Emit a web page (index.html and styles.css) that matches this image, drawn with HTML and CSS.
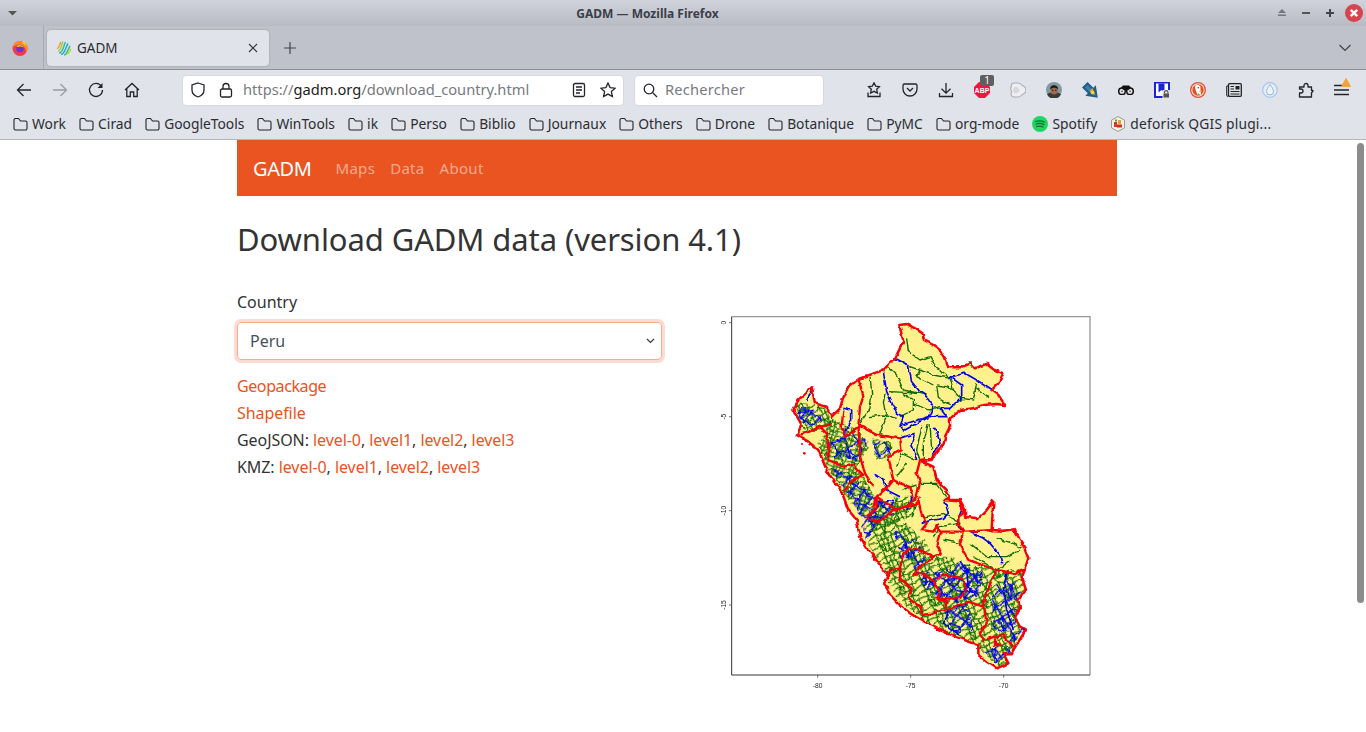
FILE: index.html
```html
<!DOCTYPE html>
<html lang="en">
<head>
<meta charset="utf-8">
<title>GADM — Mozilla Firefox</title>
<link rel="stylesheet" href="styles.css">
</head>
<body>
<div class="window">
  <header class="titlebar">
    <svg class="wm-menu" width="12" height="6" viewBox="0 0 12 6"><path d="M1 1h9L5.500 5.500z" fill="#555"/></svg>
    <div class="wm-title">GADM — Mozilla Firefox</div>
    <div class="wm-buttons">
      <svg width="12" height="10" viewBox="0 0 12 10"><path d="M6 1l4 4H2z" fill="#777"/><rect x="2" y="6.500" width="8" height="1.500" fill="#777"/></svg>
      <svg width="12" height="10" viewBox="0 0 12 10"><rect x="2" y="4" width="8" height="2" fill="#555"/></svg>
      <svg width="12" height="12" viewBox="0 0 12 12"><path d="M5 2h2v3h3v2H7v3H5V7H2V5h3z" fill="#444"/></svg>
      <svg class="wm-close" width="18" height="18" viewBox="0 0 18 18"><circle cx="9" cy="9" r="9" fill="#d9434e"/><path d="M5.800 5.800l6.400 6.400M12.200 5.800l-6.400 6.400" stroke="#fff" stroke-width="2.400"/></svg>
    </div>
  </header>

  <div class="tabstrip">
    <div class="ff-slot">
      <svg width="16" height="16" viewBox="0 0 16 16">
        <circle cx="8" cy="8.500" r="7.500" fill="#f2394f"/>
        <path d="M.6 8C1 3.500 4 1 7 1c4.500 0 8.500 3 8.500 7.500 0 1.500-.4 2.800-1 4C14 8 11 4.500 6.500 4.500 4 4.500 2 6 .6 8z" fill="#ff8f1f"/>
        <path d="M10.500 0c2 1 3.500 3 3.500 5.500L10 3z" fill="#ffc82e"/>
        <circle cx="8" cy="8.500" r="3.800" fill="#6f35c9"/>
        <path d="M4.300 6.500c2-2 6-2 7.500 1-2-1.200-4.500-1.500-6-.4z" fill="#ffb52e"/>
      </svg>
    </div>
    <div class="tab">
      <svg class="favicon" width="16" height="16" viewBox="0 0 16 16" fill="none" stroke-width="1.500">
        <path d="M1 8c2 1 2-3 4-6" stroke="#f2a233"/>
        <path d="M2 11c3 0 3-5 5-9.500" stroke="#a6cf3a"/>
        <path d="M3 13c4 0 4-6 6.500-11" stroke="#2dbfa0"/>
        <path d="M5 14.500c4 0 4-6 7-11" stroke="#2aa7e0"/>
        <path d="M8 15c3 0 3.500-5 6-9" stroke="#35c46a"/>
        <path d="M11 14c2 0 2.500-3 4-5" stroke="#b6d43a"/>
      </svg>
      <span class="tab-label">GADM</span>
      <svg class="tab-close" width="10" height="10" viewBox="0 0 10 10"><path d="M1 1l8 8M9 1l-8 8" stroke="#333" stroke-width="1.100"/></svg>
    </div>
    <svg class="new-tab" width="14" height="14" viewBox="0 0 14 14"><path d="M7 1v12M1 7h12" stroke="#444" stroke-width="1.200"/></svg>
    <svg class="tab-list" width="14" height="8" viewBox="0 0 14 8"><path d="M1.500 1l5.500 5.500L12.500 1" fill="none" stroke="#444" stroke-width="1.200"/></svg>
  </div>

  <div class="toolbar">
    <div class="nav-icons">
      <svg width="16" height="16" viewBox="0 0 16 16" class="ico"><path d="M15 8H1.500M7.500 2L1.500 8l6 6"/></svg>
      <svg width="16" height="16" viewBox="0 0 16 16" class="ico ico-off"><path d="M1 8h13.500M8.500 2l6 6-6 6"/></svg>
      <svg width="16" height="16" viewBox="0 0 16 16" class="ico"><path d="M13.500 4.500A6.500 6.500 0 1 0 14.500 8"/><path d="M14.500 1v5h-5z" class="solid"/></svg>
      <svg width="16" height="16" viewBox="0 0 16 16" class="ico"><path d="M1 8l7-6.500L15 8M2.800 6.500V14.500H6.300V10h3.400v4.500h3.500V6.500"/></svg>
    </div>
    <div class="urlbar">
      <svg width="16" height="16" viewBox="0 0 16 16" class="ico"><path d="M8 1l6 2v5c0 3.500-3 6-6 7-3-1-6-3.500-6-7V3z"/></svg>
      <svg width="14" height="16" viewBox="0 0 14 16" class="ico url-lock"><rect x="1.500" y="7" width="11" height="8" rx="1.500"/><path d="M4 7V4.500a3 3 0 0 1 6 0V7"/></svg>
      <span class="url"><span class="url-dim">https://</span>gadm.org<span class="url-dim">/download_country.html</span></span>
      <svg width="14" height="16" viewBox="0 0 14 16" class="ico url-reader"><rect x="1.500" y="1.500" width="11" height="13" rx="1.500"/><path d="M4 5h6M4 8h6M4 11h4"/></svg>
      <svg width="16" height="16" viewBox="0 0 16 16" class="ico"><path d="M8 1l2.100 4.600 5 .6-3.700 3.400 1 5L8 12.100 3.600 14.600l1-5L.9 6.200l5-.6z"/></svg>
    </div>
    <div class="searchbar">
      <svg width="15" height="15" viewBox="0 0 15 15" class="ico"><circle cx="6" cy="6" r="4.800"/><path d="M9.500 9.500L14 14"/></svg>
      <span class="search-text">Rechercher</span>
    </div>
    <div class="tool-icons">
      <svg width="16" height="16" viewBox="0 0 16 16" class="ico"><path d="M8 .8l1.700 3.400 3.700.5-2.700 2.600.7 3.700L8 9.300 4.600 11l.7-3.700L2.600 4.700l3.700-.5z"/><path d="M2 10.500v4h12v-4"/></svg>
      <svg width="16" height="16" viewBox="0 0 16 16" class="ico"><path d="M2.500 2h11A1.500 1.500 0 0 1 15 3.500V7a7 7 0 0 1-14 0V3.500A1.500 1.500 0 0 1 2.500 2z"/><path d="M5 6l3 3 3-3"/></svg>
      <svg width="16" height="16" viewBox="0 0 16 16" class="ico"><path d="M8 1v10M3.500 6.800L8 11.200l4.500-4.400M1.500 11v3.500h13V11"/></svg>
      <div class="abp">
        <svg width="16" height="16" viewBox="0 0 16 16"><path d="M5 0h6l5 5v6l-5 5H5l-5-5V5z" fill="#f0163f"/><text x="8" y="11" class="abp-text">ABP</text></svg>
        <span class="abp-badge">1</span>
      </div>
      <svg width="16" height="16" viewBox="0 0 16 16"><path d="M4 1h4c3 0 3 2 4.500 2.500C15 4.500 16 6 16 8s-1 3.500-3.500 4.500C11 13 11 15 8 15H4C2 15 1 13 1 11.500 2 10 2 10 1.200 8.500 .6 7 .6 6 1.200 4.500 1 3 2 1 4 1z" fill="#eceef2" stroke="#a9abaf" stroke-width="1.100"/><path d="M3 8h7l-3-3H4zM3 8h7l-3 3H4z" fill="#d6d7da"/></svg>
      <svg width="16" height="16" viewBox="0 0 16 16"><circle cx="8" cy="8" r="8" fill="#7f9aa3"/><path d="M1 12.500c2-3 12-3 14 0a8 8 0 0 1-14 0z" fill="#3c3a34"/><ellipse cx="8.200" cy="8.300" rx="3.600" ry="4.300" fill="#a0694a"/><path d="M4.200 7.500C3.500 2 12.500 1.800 12 7.500 10.500 5 6 5 4.200 7.500z" fill="#221611"/><path d="M6 8.200h1.500M9 8.200h1.500" stroke="#2a1a14"/></svg>
      <svg width="16" height="16" viewBox="0 0 16 16"><path d="M0 5.500L5.500 0l5.800 5.800L13.800 3.300 15.800 15.800 3.300 13.800l2.500-2.500z" fill="#1f5f8f"/><path d="M3 5.500L5.500 3l7 7-1 4-3-3z" fill="#3e7eaa"/><path d="M7.500 9l3-3 3 7.500z" fill="#f5a20c"/><circle cx="10.500" cy="10.500" r="1.800" fill="#ffd23a"/></svg>
      <svg width="16" height="10" viewBox="0 0 16 10"><circle cx="4" cy="6.300" r="3.300" fill="#e0e3e9" stroke="#111" stroke-width="1.500"/><circle cx="12" cy="6.300" r="3.300" fill="#e0e3e9" stroke="#111" stroke-width="1.500"/><path d="M3 2.500L5 .5h6l2 2-2.500 2.500h-5z" fill="#111"/><circle cx="4" cy="6.300" r="1" fill="#777"/><circle cx="12" cy="6.300" r="1" fill="#777"/></svg>
      <svg width="16" height="16" viewBox="0 0 16 16"><rect width="16" height="16" fill="#1c22d6"/><rect x="2" y="1.500" width="12" height="12.500" fill="#fff"/><path d="M4.500 1.500h6v9L7.500 8l-3 2.500z" fill="#1c22d6"/><path d="M2 14h6v2H2z" fill="#1c22d6"/><rect x="8.500" y="8" width="7.500" height="8" fill="#e0e3e9"/><rect x="9.500" y="11.500" width="5.500" height="4" fill="#555"/><path d="M10.500 11.500v-1.200a1.700 1.700 0 0 1 3.400 0v1.200" fill="none" stroke="#555" stroke-width="1.100"/></svg>
      <svg width="16" height="16" viewBox="0 0 16 16"><circle cx="8" cy="8" r="8" fill="#e4502c"/><circle cx="8" cy="8" r="6.700" fill="#fbe3dc"/><circle cx="8" cy="8" r="5.700" fill="#e4502c"/><path d="M5.500 3.200c2.500-1 5.500.3 5 3.300-.2 2 .8 4 .2 6.700H7.500C7 10 4 6 5.500 3.200z" fill="#fff"/><path d="M8 9.300l3.500-.9v2z" fill="#f5b92e"/><path d="M6.800 13.200l1.800-2 1.800 2z" fill="#4caf2a"/><circle cx="8.300" cy="5.800" r=".8" fill="#2d4f8e"/></svg>
      <svg width="16" height="14" viewBox="0 0 16 14"><rect x="2.500" y=".7" width="12.800" height="12.600" rx="1" fill="none" stroke="#222" stroke-width="1.300"/><path d="M2.500 3H.7v9a1.300 1.300 0 0 0 1.800 1.200" fill="none" stroke="#222"/><rect x="9.500" y="3" width="4" height="3.500" fill="#222"/><path d="M4.500 3.500H8M4.500 6H8M4.500 8.500h9M4.500 11h9" stroke="#222"/></svg>
      <svg width="16" height="16" viewBox="0 0 16 16"><circle cx="8" cy="8" r="7.300" fill="#e6ecf3" stroke="#a8c6e8" stroke-width="1.200"/><path d="M8 2.500c2 3 3.500 5 3.500 7a3.500 3.500 0 0 1-7 0c0-2 1.500-4 3.500-7z" fill="#eef3f8" stroke="#8fb6e0"/></svg>
      <svg width="16" height="16" viewBox="0 0 16 16" class="ico"><path d="M6 3.500a2 2 0 0 1 4 0V5h3.500v3.500H15a2 2 0 0 1 0 .1 2 2 0 0 1-1.500 2V15H1.500v-4H3a2 2 0 0 0 0-4H1.500V5H6z" stroke-linejoin="round"/></svg>
      <div class="menu-btn">
        <svg width="16" height="12" viewBox="0 0 16 12" class="ico"><path d="M0 1.500h12M0 6h15M0 10.500h15"/></svg>
        <svg class="menu-alert" width="10" height="9" viewBox="0 0 10 9"><path d="M5 .5l4.500 8H.5z" fill="#f5a13a" stroke="#f5a13a" stroke-linejoin="round"/></svg>
      </div>
    </div>
  </div>

  <nav class="bookmarks">
    <a class="bm"><svg width="15" height="14" viewBox="0 0 15 14" class="ico ico-folder"><use href="#folder"/></svg>Work</a>
    <a class="bm"><svg width="15" height="14" viewBox="0 0 15 14" class="ico ico-folder"><use href="#folder"/></svg>Cirad</a>
    <a class="bm"><svg width="15" height="14" viewBox="0 0 15 14" class="ico ico-folder"><use href="#folder"/></svg>GoogleTools</a>
    <a class="bm"><svg width="15" height="14" viewBox="0 0 15 14" class="ico ico-folder"><use href="#folder"/></svg>WinTools</a>
    <a class="bm"><svg width="15" height="14" viewBox="0 0 15 14" class="ico ico-folder"><use href="#folder"/></svg>ik</a>
    <a class="bm"><svg width="15" height="14" viewBox="0 0 15 14" class="ico ico-folder"><use href="#folder"/></svg>Perso</a>
    <a class="bm"><svg width="15" height="14" viewBox="0 0 15 14" class="ico ico-folder"><use href="#folder"/></svg>Biblio</a>
    <a class="bm"><svg width="15" height="14" viewBox="0 0 15 14" class="ico ico-folder"><use href="#folder"/></svg>Journaux</a>
    <a class="bm"><svg width="15" height="14" viewBox="0 0 15 14" class="ico ico-folder"><use href="#folder"/></svg>Others</a>
    <a class="bm"><svg width="15" height="14" viewBox="0 0 15 14" class="ico ico-folder"><use href="#folder"/></svg>Drone</a>
    <a class="bm"><svg width="15" height="14" viewBox="0 0 15 14" class="ico ico-folder"><use href="#folder"/></svg>Botanique</a>
    <a class="bm"><svg width="15" height="14" viewBox="0 0 15 14" class="ico ico-folder"><use href="#folder"/></svg>PyMC</a>
    <a class="bm"><svg width="15" height="14" viewBox="0 0 15 14" class="ico ico-folder"><use href="#folder"/></svg>org-mode</a>
    <a class="bm"><svg width="16" height="16" viewBox="0 0 16 16"><circle cx="8" cy="8" r="8" fill="#1ed760"/><path d="M3.500 5.500c3-1 6.500-.8 9 .7M4 8c2.500-.8 5.500-.6 7.800.6M4.600 10.500c2-.6 4.500-.5 6.400.5" fill="none" stroke="#166b38" stroke-width="1.300" stroke-linecap="round"/></svg>Spotify</a>
    <a class="bm bm-long"><svg width="16" height="16" viewBox="0 0 16 16"><path d="M8 .5l6.500 3.700v7.600L8 15.500l-6.500-3.700V4.200z" fill="#f6f1e6" stroke="#999"/><rect x="4" y="6" width="3" height="5" fill="#d8382c"/><rect x="8" y="4" width="3" height="4" fill="#e9a323"/><rect x="7" y="8.500" width="5" height="3" fill="#c9302c"/><rect x="5" y="3.500" width="2" height="2" fill="#5c9e3b"/></svg>deforisk QGIS plugi...</a>
  </nav>

  <div class="viewport">
    <main class="page">
      <div class="site-nav">
        <a class="brand">GADM</a>
        <a class="nav-link">Maps</a>
        <a class="nav-link">Data</a>
        <a class="nav-link">About</a>
      </div>
      <h1 class="heading">Download GADM data (version 4.1)</h1>
      <div class="columns">
        <section class="form-col">
          <label class="field-label">Country</label>
          <div class="select"><span>Peru</span>
            <svg width="9" height="6" viewBox="0 0 9 6"><path d="M1 1l3.500 3.500L8 1" fill="none" stroke="#343a40" stroke-width="1.200"/></svg>
          </div>
          <p class="line"><a class="tight">Geopackage</a></p>
          <p class="line"><a>Shapefile</a></p>
          <p class="line">GeoJSON: <a>level-0</a>, <a>level1</a>, <a>level2</a>, <a>level3</a></p>
          <p class="line">KMZ: <a>level-0</a>, <a>level1</a>, <a>level2</a>, <a>level3</a></p>
        </section>
        <svg class="map" width="380" height="380" viewBox="0 0 1140 1140">
          <defs>
            <pattern id="mesh-g" width="120" height="120" patternUnits="userSpaceOnUse" patternTransform="rotate(17) scale(.42)">
              <path class="mesh-line-g" d="M0 14L22 8 44 20 68 10 92 22 120 14M0 46L18 40 40 52 66 42 88 54 120 46M0 78L24 72 46 84 70 74 96 86 120 78M0 104L20 110 42 102 64 112 90 104 120 104M22 0V8L18 40 24 72 20 110 22 120M44 20L40 52M46 84L42 102 44 120M44 0V20M68 0V10L66 42 70 74 64 112 68 120M92 0V22L88 54M96 86L90 104 92 120M22 8L40 52M70 74L88 54"/>
            </pattern>
            <pattern id="mesh-f" width="120" height="120" patternUnits="userSpaceOnUse" patternTransform="rotate(-24) scale(.58)">
              <path class="mesh-line-f" d="M0 14L22 8 44 20 68 10 92 22 120 14M0 46L18 40 40 52 66 42 88 54 120 46M0 78L24 72 46 84 70 74 96 86 120 78M0 104L20 110 42 102 64 112 90 104 120 104M22 0V8L18 40 24 72 20 110 22 120M44 20L40 52M46 84L42 102 44 120M44 0V20M68 0V10L66 42 70 74 64 112 68 120M92 0V22L88 54M96 86L90 104 92 120M22 8L40 52M70 74L88 54"/>
            </pattern>
            <pattern id="mesh-b" width="120" height="120" patternUnits="userSpaceOnUse" patternTransform="rotate(38) scale(.5)">
              <path class="mesh-line-b" d="M0 30L30 18 60 40 90 26 120 30M0 90L28 76 62 96 92 84 120 90M30 0V18L28 76 30 120M90 0V26L92 84 90 120M60 40L62 96M60 40L28 76"/>
            </pattern>
            <pattern id="mesh-c" width="120" height="120" patternUnits="userSpaceOnUse" patternTransform="rotate(-31) scale(.56)">
              <path class="mesh-line-c" d="M0 30L30 18 60 40 90 26 120 30M0 90L28 76 62 96 92 84 120 90M30 0V18L28 76 30 120M90 0V26L92 84 90 120M60 40L62 96M90 26L62 96"/>
            </pattern>
            <filter id="wobble" x="-5%" y="-5%" width="110%" height="110%">
              <feTurbulence type="fractalNoise" baseFrequency="0.05" numOctaves="2" seed="7" result="n"/>
              <feDisplacementMap in="SourceGraphic" in2="n" scale="12" xChannelSelector="R" yChannelSelector="G"/>
            </filter>
            <clipPath id="peru"><path d="M538 45L560 42 585 55 608 70 612 90 640 105 660 120 675 145 685 172 720 172 750 160 765 175 800 162 820 178 850 190 835 220 815 240 835 255 855 285 830 282 790 285 760 295 725 300 690 325 690 350 675 380 670 405 645 430 635 450 600 452 640 470 650 510 680 540 690 560 675 570 720 570 735 598 735 620 775 625 800 600 820 572 815 660 850 662 880 658 905 695 925 745 915 775 905 800 918 840 895 870 900 895 885 925 900 950 918 960 905 980 880 1020 875 1030 850 1030 865 1060 830 1075 800 1055 775 1035 775 1005 720 985 660 960 620 940 570 910 540 885 515 860 492 820 505 800 480 765 445 720 420 680 410 630 385 600 365 545 345 520 320 480 295 420 265 395 230 375 245 345 220 300 235 270 275 232 285 280 320 290 335 320 360 295 370 260 385 230 420 205 490 180 525 145 550 95z"/></clipPath>
          </defs>
          <g class="map-art">
            <g filter="url(#wobble)">
              <path class="fill-peru" d="M538 45L560 42 585 55 608 70 612 90 640 105 660 120 675 145 685 172 720 172 750 160 765 175 800 162 820 178 850 190 835 220 815 240 835 255 855 285 830 282 790 285 760 295 725 300 690 325 690 350 675 380 670 405 645 430 635 450 600 452 640 470 650 510 680 540 690 560 675 570 720 570 735 598 735 620 775 625 800 600 820 572 815 660 850 662 880 658 905 695 925 745 915 775 905 800 918 840 895 870 900 895 885 925 900 950 918 960 905 980 880 1020 875 1030 850 1030 865 1060 830 1075 800 1055 775 1035 775 1005 720 985 660 960 620 940 570 910 540 885 515 860 492 820 505 800 480 765 445 720 420 680 410 630 385 600 365 545 345 520 320 480 295 420 265 395 230 375 245 345 220 300 235 270 275 232 285 280 320 290 335 320 360 295 370 260 385 230 420 205 490 180 525 145 550 95z"/>
              <g clip-path="url(#peru)">
                <path fill="url(#mesh-f)" d="M225 275L320 290 335 345 270 370 235 345z"/>
                <path fill="url(#mesh-g)" d="M295 400L335 325 420 365 445 415 410 475 430 500 470 570 535 580 540 640 470 650 430 620 380 560 320 470z"/>
                <path fill="url(#mesh-f)" d="M455 385L520 395 510 440 470 450z"/>
                <path fill="url(#mesh-f)" d="M425 640L480 620 560 640 620 700 640 740 700 740 720 760 840 780 910 780 920 850 900 960 880 1030 850 1080 770 1010 620 940 530 860 470 760z"/>
                <path fill="url(#mesh-f)" d="M520 560L590 560 580 620 530 640z"/>
                <path fill="url(#mesh-b)" d="M230 290L290 300 310 330 270 350 240 330z"/>
                <path fill="url(#mesh-c)" d="M325 400L410 365 445 395 410 450 340 440z"/>
                <path fill="url(#mesh-b)" d="M330 470L400 500 470 570 520 570 530 610 470 640 440 700 420 620 390 560z"/>
                <path fill="url(#mesh-c)" d="M455 390L520 395 500 450 470 440z"/>
                <path fill="url(#mesh-c)" d="M520 660L590 690 625 760 590 780 540 740z"/>
                <path fill="url(#mesh-b)" d="M590 780L650 790 720 760 790 790 780 850 720 880 660 870 610 830z"/>
                <path fill="url(#mesh-c)" d="M815 830L880 800 905 850 890 920 915 960 880 1000 820 950z"/>
                <path fill="url(#mesh-b)" d="M670 900L745 880 760 960 700 970z"/>
                <path fill="url(#mesh-c)" d="M790 1030L850 1000 875 1030 830 1060z"/>
              </g>
              <g class="ln-green">
                <path d="M560 85L565 125 600 150 630 140 650 175 690 205 700 240 680 230 650 225 655 265 690 285"/>
                <path d="M505 170L530 195 550 240 620 255M510 245L600 250 580 250"/>
                <path d="M570 170L640 195 690 205M600 180L590 200 640 225"/>
                <path d="M450 200L455 250 450 295 420 340M450 320L490 315 530 325"/>
                <path d="M495 250L490 280 500 320 480 370 510 380"/>
                <path d="M545 250L580 270 580 300 540 320M580 280L625 300 660 290"/>
                <path d="M605 350L590 420 600 450M625 340L610 400 610 450M630 340L635 420"/>
                <path d="M770 220L760 270 725 265 700 240M770 235L810 265M725 265L700 290"/>
                <path d="M530 470L545 430 585 450M530 500L560 460M600 520L650 520 680 560M545 540L590 525"/>
                <path d="M610 625L670 610 720 640 660 650 640 680M720 640L715 650M670 690L720 700"/>
                <path d="M750 700L800 740 860 740 900 720M830 685L880 700 905 715M760 740L830 780 870 750"/>
                <path d="M560 600L590 580 575 625"/>
              </g>
              <g class="ln-blue">
                <path d="M525 145L565 165 575 215 600 245 625 265 640 290 625 320 545 345"/>
                <path d="M490 185L500 245 530 310 550 320 540 350 555 360 625 320 680 320 660 295 690 295 725 260 725 225 690 200 735 190 770 210 815 240"/>
                <path d="M640 350L650 365 660 400 640 430 635 450"/>
                <path d="M540 385L585 370 575 400 590 450"/>
                <path d="M370 295L395 300 395 330 370 375"/>
                <path d="M605 640L640 630 670 625 685 610 675 575M725 600L715 625 715 650 730 665"/>
                <path d="M750 665L790 685 810 700 840 735 845 760"/>
                <path d="M460 490L490 510 500 540 540 560"/>
                <path d="M280 240L260 270M575 560L560 600"/>
                <path d="M720 750L740 780 745 830 770 860M860 790L850 840 860 900 880 960M690 900L670 940 720 975"/>
              </g>
              <g class="ln-red">
                <path d="M415 205L430 260 420 290 415 345 470 375 540 385 545 420 505 440 520 510 505 530 470 560 460 590"/>
                <path d="M370 300L365 350 375 380 420 350"/>
                <path d="M335 345L300 350 270 365 235 375M300 350L320 370 325 410 325 450 370 470 400 465 430 495 405 505 375 540"/>
                <path d="M415 345L420 420 420 440 435 490 460 530"/>
                <path d="M600 452L590 490 600 515 590 560 560 590 530 600 470 560"/>
                <path d="M520 510L540 520 570 530 580 560"/>
                <path d="M470 560L470 590 440 625 480 635 520 600 590 580 600 560"/>
                <path d="M595 570L605 615 620 640 605 660 640 665 650 645 660 665 715 665 735 665 820 660"/>
                <path d="M675 570L720 575 730 610 715 620 715 645 730 660 720 705 745 750 830 780 880 790 915 775"/>
                <path d="M660 665L650 705 665 730 640 740 600 720 570 715 550 730 540 775 510 780 505 800"/>
                <path d="M540 775L540 805 575 835 565 865 600 890 610 915 640 910 675 900 680 875 650 865 660 850 640 810 600 790 580 795 605 765 630 750 640 740"/>
                <path d="M650 865L720 865 740 835 725 805 680 795 650 805"/>
                <path d="M830 780L815 810 800 850 790 875 795 910 800 940 780 970 790 990 825 980 850 975 880 1010"/>
                <path d="M675 900L745 875 790 890"/>
                <path d="M825 985L825 1005 850 1005"/>
              </g>
              <path class="ln-outline" d="M538 45L560 42 585 55 608 70 612 90 640 105 660 120 675 145 685 172 720 172 750 160 765 175 800 162 820 178 850 190 835 220 815 240 835 255 855 285 830 282 790 285 760 295 725 300 690 325 690 350 675 380 670 405 645 430 635 450 600 452 640 470 650 510 680 540 690 560 675 570 720 570 735 598 735 620 775 625 800 600 820 572 815 660 850 662 880 658 905 695 925 745 915 775 905 800 918 840 895 870 900 895 885 925 900 950 918 960 905 980 880 1020 875 1030 850 1030 865 1060 830 1075 800 1055 775 1035 775 1005 720 985 660 960 620 940 570 910 540 885 515 860 492 820 505 800 480 765 445 720 420 680 410 630 385 600 365 545 345 520 320 480 295 420 265 395 230 375 245 345 220 300 235 270 275 232 285 280 320 290 335 320 360 295 370 260 385 230 420 205 490 180 525 145 550 95z"/>
            </g>
            <circle cx="253" cy="430" r="4" fill="#f00"/><circle cx="246" cy="402" r="3" fill="#f00"/>
            <path class="plot-edge-light" d="M35 20H1110V1095"/>
            <path class="plot-edge" d="M35 20V1095H1110"/>
            <path class="plot-tick" d="M35 38h-8M35 320h-8M35 602h-8M35 885h-8M293 1095v8M572 1095v8M851 1095v8"/>
            <text class="tick-y" transform="translate(18 38) rotate(-90)">0</text>
            <text class="tick-y" transform="translate(18 320) rotate(-90)">-5</text>
            <text class="tick-y" transform="translate(18 602) rotate(-90)">-10</text>
            <text class="tick-y" transform="translate(18 885) rotate(-90)">-15</text>
            <text class="tick-x" x="293" y="1135">-80</text>
            <text class="tick-x" x="572" y="1135">-75</text>
            <text class="tick-x" x="851" y="1135">-70</text>
          </g>
        </svg>
      </div>
    </main>
    <div class="scrollbar"><div class="scroll-thumb"></div></div>
  </div>
</div>
<svg class="sprites" width="0" height="0"><symbol id="folder" viewBox="0 0 15 14"><path d="M1 3a1.500 1.500 0 0 1 1.500-1.500h3L7.500 4h5A1.500 1.500 0 0 1 14 5.500v6a1.500 1.500 0 0 1-1.500 1.500h-10A1.500 1.500 0 0 1 1 11.500z"/></symbol></svg>
</body>
</html>
```

FILE: styles.css
```css
* { box-sizing: border-box; }
html, body { margin: 0; height: 100%; overflow: hidden; background: #fff; }
body { font-family: "Noto Sans", sans-serif; color: #333; }
.window { display: flex; flex-direction: column; height: 732px; }
.sprites { position: absolute; }

.titlebar { height: 26px; display: flex; align-items: center; padding: 0 7px; background: linear-gradient(#d0d3dc, #b8bbc4); }
.wm-menu { flex: none; }
.wm-title { flex: 1; text-align: center; font-size: 12px; font-weight: 700; color: #3a3f4a; }
.wm-buttons { display: flex; align-items: center; gap: 12px; margin-right: -4px; }
.wm-close { margin-left: -3px; }

.tabstrip { height: 44px; background: #bfc2cb; border-bottom: 1px solid #8d9096; display: flex; align-items: center; }
.ff-slot { width: 44px; height: 43px; flex: none; display: flex; align-items: center; padding-left: 12px; border-right: 1px solid #a6a9b0; }
.tab { width: 222px; height: 36px; margin-left: 3px; margin-top: 1px; background: #e0e3e9; border-radius: 4px; display: flex; align-items: center; padding: 0 11px 0 9px; box-shadow: 0 0 2px rgba(0,0,0,.25); }
.tab-label { flex: 1; margin-left: 5px; font-size: 13.500px; color: #2b2d33; }
.new-tab { margin-left: 14px; }
.tab-list { margin-left: auto; margin-right: 14px; }

.toolbar { height: 40px; background: #e0e3e9; display: flex; align-items: center; }
.ico { fill: none; stroke: #23252b; stroke-width: 1.300; flex: none; }
.ico .solid { fill: #23252b; stroke: none; }
.ico-off { stroke: #9a9ca3; }
.nav-icons { display: flex; align-items: center; gap: 20px; width: 182px; padding-left: 16px; flex: none; }
.urlbar { width: 442px; height: 31px; background: #fff; border-radius: 4px; border: 1px solid #d6d8de; display: flex; align-items: center; padding: 0 7px; flex: none; }
.url-lock { margin-left: 13px; }
.url { flex: 1; margin-left: 10px; padding-bottom: 2px; font-size: 14.670px; color: #1c1e22; white-space: nowrap; }
.url-dim { color: #777a80; }
.url-reader { margin-right: 14px; }
.searchbar { width: 190px; height: 31px; margin-left: 10px; background: #fff; border-radius: 4px; border: 1px solid #d6d8de; display: flex; align-items: center; padding: 0 8px; flex: none; }
.search-text { margin-left: 7px; padding-bottom: 2px; font-size: 14.670px; letter-spacing: .2px; color: #777a80; }
.tool-icons { margin-left: 42px; width: 484px; display: flex; align-items: center; justify-content: space-between; flex: none; }
.tool-icons > * { flex: none; }
.abp { position: relative; width: 16px; height: 16px; }
.abp svg { display: block; }
.abp-text { font: 700 7px "Liberation Sans", sans-serif; fill: #fff; text-anchor: middle; }
.abp-badge { position: absolute; top: -7px; left: 6px; width: 14px; height: 11px; background: #5f5f5f; border-radius: 2px; font: 10px/11px "Noto Sans", sans-serif; color: #fff; text-align: center; }
.menu-btn { position: relative; width: 16px; height: 12px; }
.menu-btn svg:first-child { display: block; }
.menu-alert { position: absolute; left: 7px; top: -6px; }

.bookmarks { height: 30px; background: #e0e3e9; border-bottom: 1px solid #b4b6bc; display: flex; align-items: center; padding: 0 0 2px 13px; gap: 13.150px; }
.bm { display: flex; align-items: center; gap: 4px; font-size: 13.800px; color: #2b2d33; white-space: nowrap; }
.bm-long { letter-spacing: .2px; }
.ico-folder { stroke-width: 1.100; }

.viewport { flex: 1; display: flex; min-height: 0; }
.page { flex: 1; min-width: 0; background: #fff; }
.scrollbar { width: 12px; flex: none; padding: 3px 2px 0 3px; }
.scroll-thumb { height: 460px; background: #8c8c8c; border-radius: 4px; }

.site-nav { width: 880px; height: 56px; margin: 0 auto; background: #e95420; display: flex; align-items: center; padding-left: 16px; }
.brand { font-size: 20px; color: #fff; margin-right: 24px; letter-spacing: -.4px; }
.nav-link { font-size: 15px; letter-spacing: .3px; color: rgba(255,255,255,.5); margin-right: 15px; }
.heading { width: 880px; margin: 21px auto 0; font-size: 31px; font-weight: 400; line-height: 44px; letter-spacing: -.1px; color: #333; white-space: nowrap; }
.columns { width: 880px; margin: 29px auto 0; display: flex; align-items: flex-start; }
.form-col { width: 425px; flex: none; font-size: 16px; }
.field-label { display: block; line-height: 24px; margin-bottom: 8px; }
.select { height: 38px; border: 1px solid #f7ab91; border-radius: 4px; box-shadow: 0 0 0 3px #fcdcd2; display: flex; align-items: center; justify-content: space-between; padding: 0 6px 0 12px; color: #495057; margin-bottom: 14px; }
.line { margin: 0 0 3px; line-height: 24px; white-space: nowrap; letter-spacing: -.07px; }
.line a { color: #e95420; }
.line a.tight { letter-spacing: -.4px; }
.map { flex: none; margin-left: 58px; margin-top: 20px; display: block; }
.map-art { filter: blur(.3px); }
.fill-peru { fill: #fff28c; }
.mesh-line-g, .mesh-line-f, .mesh-line-b, .mesh-line-c { fill: none; stroke-linejoin: round; }
.mesh-line-g { stroke: #0c6a00; stroke-width: 8; }
.mesh-line-f { stroke: #0c6a00; stroke-width: 6.500; }
.mesh-line-b { stroke: #0000f0; stroke-width: 9; }
.mesh-line-c { stroke: #0000f0; stroke-width: 8; }
.ln-green path, .ln-blue path, .ln-red path, .ln-outline { fill: none; stroke-linejoin: round; }
.ln-green path { stroke: #0c6a00; stroke-width: 4; }
.ln-blue path { stroke: #0000f0; stroke-width: 5; }
.ln-red path { stroke: #f5000a; stroke-width: 7; }
.ln-outline { stroke: #f5000a; stroke-width: 7.500; }
.plot-edge { fill: none; stroke: #333; stroke-width: 3; }
.plot-edge-light { fill: none; stroke: #999; stroke-width: 4; }
.plot-tick { stroke: #333; stroke-width: 2; fill: none; }
.tick-y, .tick-x { font: 20px "Liberation Sans", sans-serif; fill: #222; text-anchor: middle; }
```
